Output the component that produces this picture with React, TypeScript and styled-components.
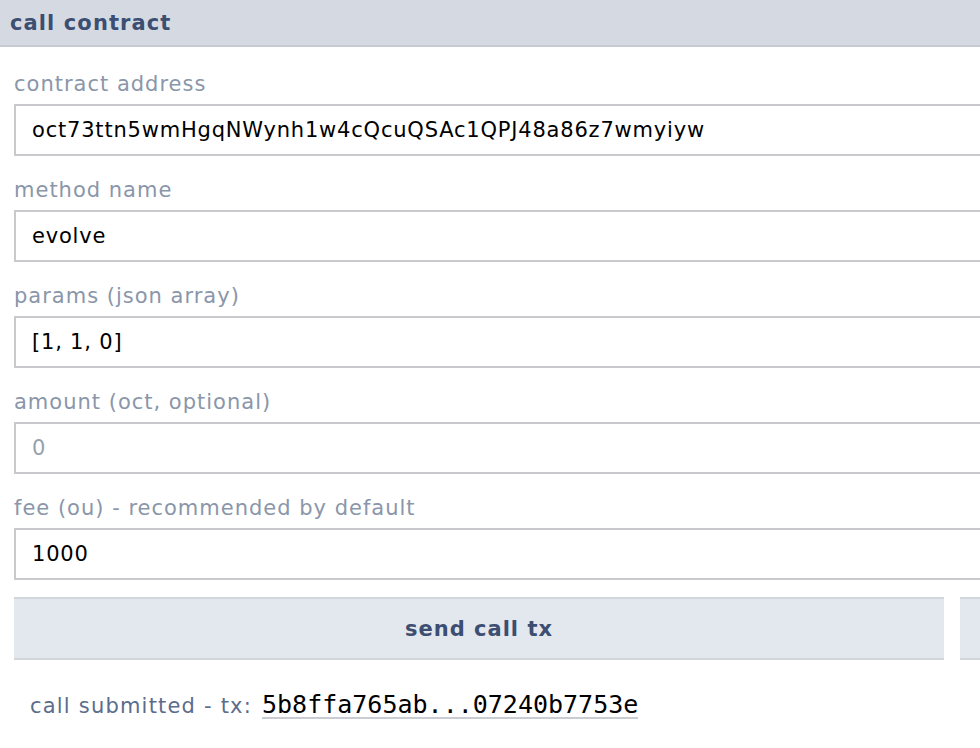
import React from "react";
import styled, { createGlobalStyle } from "styled-components";

const Global = createGlobalStyle`
  html, body {
    margin: 0;
    padding: 0;
    background: #ffffff;
    overflow: hidden;
  }
  body {
    font-family: "DejaVu Sans", Verdana, sans-serif;
  }
`;

const Panel = styled.section`
  width: 1904px;
  display: flex;
  flex-direction: column;
`;

const Header = styled.header`
  height: 45px;
  background: #d5dae2;
  border-bottom: 2px solid #c6cbd1;
  display: flex;
  align-items: center;
  padding: 0 10px;
`;

const Title = styled.h2`
  margin: 0;
  font-family: "DejaVu Sans", Verdana, sans-serif;
  font-weight: bold;
  font-size: 21px;
  color: #3c4e71;
  letter-spacing: 1.1px;
`;

const Form = styled.form`
  display: flex;
  flex-direction: column;
  padding: 24px 14px 0 14px;
`;

const Field = styled.div`
  display: flex;
  flex-direction: column;
  margin-bottom: ${(p: { $last?: boolean }) => (p.$last ? "17px" : "21px")};
`;

const Label = styled.label`
  height: 26px;
  line-height: 26px;
  margin-bottom: 7px;
  font-size: 21px;
  letter-spacing: 1px;
  color: #8a96a9;
`;

const Input = styled.input`
  box-sizing: border-box;
  height: 52px;
  width: 100%;
  margin: 0;
  padding: 0 16px;
  border: 2px solid #c7c9cc;
  border-radius: 0;
  background: #ffffff;
  font-family: "DejaVu Sans", Verdana, sans-serif;
  font-size: 21px;
  letter-spacing: 0.8px;
  color: #000000;
  outline: none;

  &:disabled {
    color: #98a1ae;
    background: #ffffff;
  }
`;

const Actions = styled.div`
  display: grid;
  grid-template-columns: 1fr 1fr;
  gap: 16px;
`;

const Button = styled.button`
  box-sizing: border-box;
  height: 63px;
  margin: 0;
  border: none;
  border-top: 2px solid #d1d5dc;
  border-bottom: 2px solid #d1d5dc;
  background: #e3e7ee;
  font-family: "DejaVu Sans", Verdana, sans-serif;
  font-weight: bold;
  font-size: 21px;
  letter-spacing: 1px;
  color: #3c4e71;
  cursor: pointer;
`;

const Status = styled.p`
  margin: 32px 0 0 30px;
  display: flex;
  align-items: baseline;
  gap: 10px;
  font-size: 21px;
  letter-spacing: 1.2px;
  color: #5b6c8c;
`;

const TxHash = styled.a`
  font-family: "DejaVu Sans Mono", "Liberation Mono", monospace;
  font-size: 25px;
  letter-spacing: 0;
  line-height: 1;
  color: #000000;
  text-decoration: none;
  border-bottom: 2px solid #c9cdd3;
`;

const fields = [
  { label: "contract address", value: "oct73ttn5wmHgqNWynh1w4cQcuQSAc1QPJ48a86z7wmyiyw" },
  { label: "method name", value: "evolve" },
  { label: "params (json array)", value: "[1, 1, 0]" },
  { label: "amount (oct, optional)", value: "0", disabled: true },
  { label: "fee (ou) - recommended by default", value: "1000" },
];

export default function App() {
  return (
    <>
      <Global />
      <Panel>
        <Header>
          <Title>call contract</Title>
        </Header>
        <Form onSubmit={(e) => e.preventDefault()}>
          {fields.map((f, i) => (
            <Field key={f.label} $last={i === fields.length - 1}>
              <Label>{f.label}</Label>
              <Input defaultValue={f.value} disabled={f.disabled} readOnly={!f.disabled} />
            </Field>
          ))}
          <Actions>
            <Button type="submit">send call tx</Button>
            <Button type="button" />
          </Actions>
        </Form>
        <Status>
          call submitted - tx:
          <TxHash href="#">5b8ffa765ab...07240b7753e</TxHash>
        </Status>
      </Panel>
    </>
  );
}
